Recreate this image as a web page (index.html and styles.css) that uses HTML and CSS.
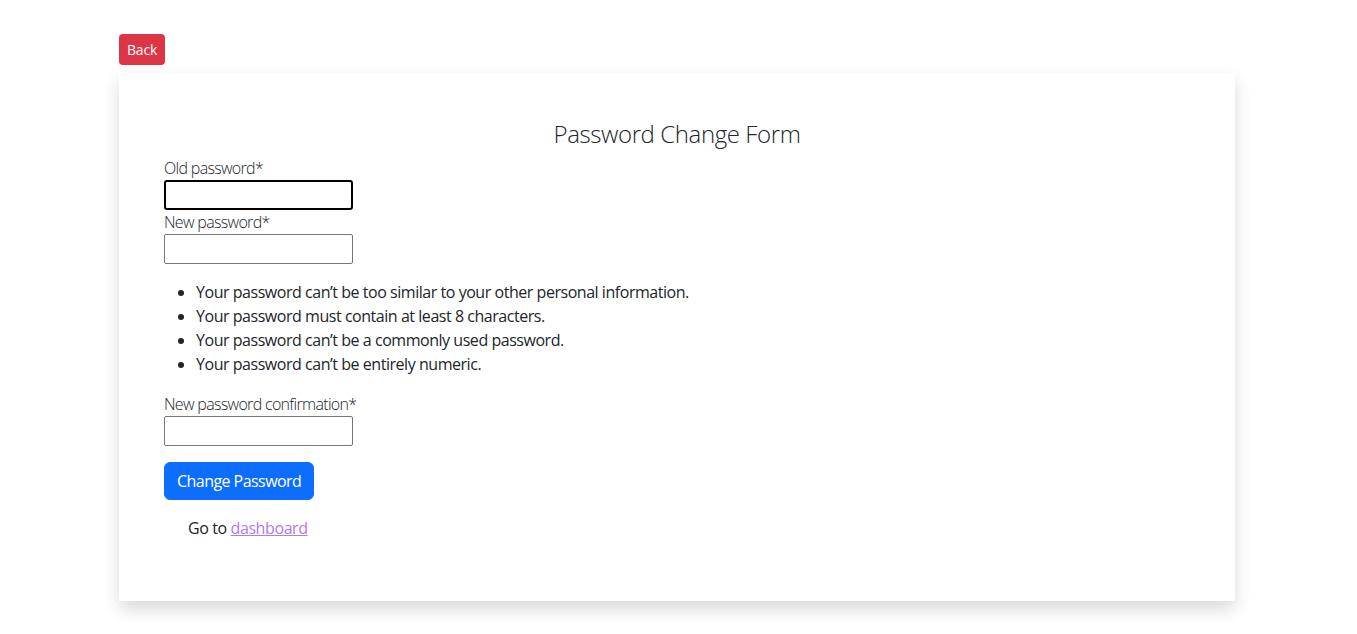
FILE: index.html
```html
<!DOCTYPE html>
<html lang="en">
<head>
<meta charset="utf-8">
<title>Password Change Form</title>
<link rel="stylesheet" href="styles.css">
</head>
<body>
<div class="container">
  <div class="top">
    <a class="btn-back" href="#">Back</a>
  </div>
  <div class="card">
    <h3 class="title">Password Change Form</h3>
    <form class="form">
      <label class="label" for="old">Old password*</label>
      <input class="input focused" id="old" type="password">
      <label class="label" for="new1">New password*</label>
      <input class="input" id="new1" type="password">
      <ul class="help">
        <li>Your password can’t be too similar to your other personal information.</li>
        <li>Your password must contain at least 8 characters.</li>
        <li>Your password can’t be a commonly used password.</li>
        <li>Your password can’t be entirely numeric.</li>
      </ul>
      <label class="label" for="new2">New password confirmation*</label>
      <input class="input" id="new2" type="password">
      <button class="btn-primary" type="button">Change Password</button>
    </form>
    <p class="goto">Go to <a class="link" href="#">dashboard</a></p>
  </div>
</div>
</body>
</html>
```
FILE: styles.css
```css
* { box-sizing: border-box; }
html, body { margin: 0; padding: 0; }
body {
  font-family: "Open Sans", "Noto Sans", sans-serif;
  font-size: 16px;
  line-height: 24px;
  color: #212529;
  background: #fff;
}
.container {
  width: 1116px;
  margin-left: calc((100% - 1116px) / 2 - 1.5px);
  padding-top: 34px;
  padding-bottom: 24px;
}
.top { display: flex; height: 39px; align-items: flex-start; }
.btn-back {
  display: inline-block;
  background: #dc3545;
  color: #fff;
  font-size: 14px;
  line-height: 21px;
  padding: 5px 8px;
  border-radius: 4px;
  text-decoration: none;
  letter-spacing: -0.2px;
}
.card {
  background: #fff;
  box-shadow: 0 8px 16px rgba(0,0,0,0.15);
  padding: 44px 45px 61px;
}
.title {
  margin: 0 0 5px;
  text-align: center;
  font-weight: 300;
  font-size: 24px;
  line-height: 34px;
  color: #212529;
  letter-spacing: -0.4px;
}
.form { display: flex; flex-direction: column; align-items: flex-start; }
.label {
  font-weight: 300;
  color: #212529;
  line-height: 24px;
  letter-spacing: -0.68px;
}
.input {
  width: 189px;
  height: 30px;
  border: 1px solid #767676;
  border-radius: 2px;
  margin: 0;
  padding: 1px 2px;
  font-size: 13px;
}
.input.focused {
  border: 2px solid #000;
  border-radius: 3px;
}
.help {
  margin: 16px 0 16px;
  padding-left: 32px;
  letter-spacing: -0.46px;
}
.help li { line-height: 24px; }
.btn-primary {
  margin-top: 16px;
  background: #0d6efd;
  color: #fff;
  border: 1px solid #0d6efd;
  border-radius: 6px;
  font-family: inherit;
  font-size: 16px;
  line-height: 24px;
  padding: 6px 12px;
  height: 38px;
  width: 150px;
  white-space: nowrap;
  letter-spacing: -0.55px;
}
.goto {
  margin: 16px 0 0 24px;
  letter-spacing: -0.4px;
}
.link { color: #ad7bee; }
```
